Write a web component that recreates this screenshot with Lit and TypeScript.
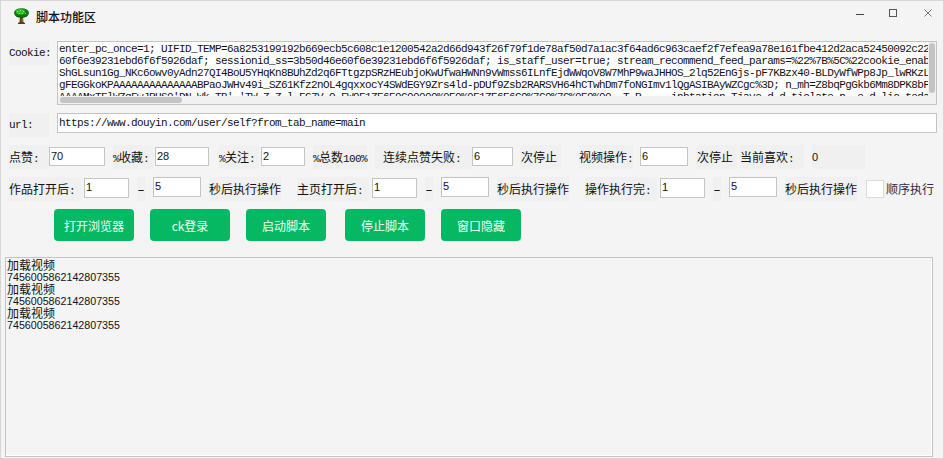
import { LitElement, html, css } from "lit";
import { customElement } from "lit/decorators.js";

const COOKIE = [
  "enter_pc_once=1; UIFID_TEMP=6a8253199192b669ecb5c608c1e1200542a2d66d943f26f79f1de78af50d7a1ac3f64ad6c963caef2f7efea9a78e161fbe412d2aca52450092c22",
  "60f6e39231ebd6f6f5926daf; sessionid_ss=3b50d46e60f6e39231ebd6f6f5926daf; is_staff_user=true; stream_recommend_feed_params=%22%7B%5C%22cookie_enab",
  "ShGLsun1Gg_NKc6owv0yAdn27QI4BoU5YHqKn8BUhZd2q6FTtgzpSRzHEubjoKwUfwaHWNn9vWmss6ILnfEjdWWqoV8W7MhP9waJHHOS_2lq52EnGjs-pF7KBzx40-BLDyWfWPp8Jp_lwRKzL",
  "gFEGGkoKPAAAAAAAAAAAAAABPaoJWHv49i_SZ61Kfz2nOL4gqxxocY4SWdEGY9Zrs4ld-pDUf9Zsb2RARSVH64hCTwhDm7foNGImv1lQgASIBAyWZCgc%3D; n_mh=Z8bqPgGkb6Mm8DPK8bFb",
  "AAAAMxTFlWZgFwJRUS0'DN_Wk_TB'_'TW_Z_Z_l_FG7V_O_FW9F1ZE6E9C00000%0E0%0F1ZE6E6C0%7C0%7C%0E0%00__T_R_____inbtation_Tjaye_d_d_tiolate_p__e_d_lio_teda_ts_e_T_I",
];

const LOG = ["加载视频", "7456005862142807355", "加载视频", "7456005862142807355", "加载视频", "7456005862142807355"];

@customElement("app-root")
export class AppRoot extends LitElement {
  static styles = css`
    :host {
      display: block;
      width: 944px;
      height: 459px;
      box-sizing: border-box;
      background: #f4f4f4;
      border: 1px solid #d6d6d6;
      overflow: hidden;
      font-family: "Noto Sans CJK SC", "Liberation Sans", sans-serif;
      color: #111;
      font-size: 12px;
    }
    .titlebar {
      display: flex;
      align-items: flex-start;
      height: 32px;
      padding-left: 13px;
    }
    .logo { width: 15px; height: 16px; margin: 7px 7px 0 0; flex: none; }
    .title { font-size: 12px; font-weight: 500; color: #111; flex: 1; line-height: 32px; }
    .ctl { width: 16px; height: 16px; margin-top: 4px; flex: none; }
    .ctl.max { margin-left: 17px; }
    .ctl.close { margin-left: 19px; margin-right: 7px; }
    .row1 {
      display: flex;
      align-items: flex-start;
      margin-top: 8px;
      padding-left: 8px;
    }
    .mono-label {
      width: 40px;
      height: 24px;
      flex: none;
      background: #f0f0f0;
      font-family: "Liberation Mono", monospace;
      font-size: 11px;
      letter-spacing: -0.6px;
      line-height: 24px;
      margin-right: 8px;
      white-space: nowrap;
    }
    .cookie {
      position: relative;
      width: 880px;
      height: 64px;
      box-sizing: border-box;
      background: #fff;
      border: 1px solid #c4c4c4;
      overflow: hidden;
    }
    .cookie-text {
      height: 54px;
      padding: 1px 0 0 1px;
      box-sizing: border-box;
      overflow: hidden;
      width: 870px;
      font-family: "Liberation Mono", monospace;
      font-size: 11px;
      letter-spacing: -0.6px;
      line-height: 12px;
      white-space: pre;
    }
    .htrack {
      position: absolute;
      left: 0;
      right: 0;
      bottom: 0;
      height: 8px;
      background: #f1f1f1;
    }
    .vtrack {
      position: absolute;
      right: 0;
      top: 0;
      bottom: 0;
      width: 8px;
      background: #f1f1f1;
    }
    .hthumb {
      position: absolute;
      left: 2px;
      bottom: 1px;
      width: 122px;
      height: 6px;
      border-radius: 3px;
      background: #c4c4c4;
    }
    .vthumb {
      position: absolute;
      right: 1px;
      top: 1px;
      width: 6px;
      height: 50px;
      border-radius: 3px;
      background: #c4c4c4;
    }
    .row2 {
      display: flex;
      align-items: flex-start;
      margin-top: 8px;
      padding-left: 8px;
    }
    .url {
      width: 880px;
      height: 20px;
      box-sizing: border-box;
      background: #fff;
      border: 1px solid #c4c4c4;
      padding-left: 1px;
      font-family: "Liberation Mono", monospace;
      font-size: 11px;
      letter-spacing: -0.6px;
      line-height: 19px;
      white-space: pre;
    }
    .row {
      display: flex;
      align-items: flex-start;
      padding-left: 8px;
      height: 24px;
      margin-top: 8px;
    }
    .lb {
      height: 24px;
      line-height: 24px;
      background: #f0f0f0;
      white-space: nowrap;
      font-size: 12px;
      color: #111;
      flex: none;
      box-sizing: border-box;
    }
    .a {
      font-family: "Liberation Mono", monospace;
      font-size: 11px;
      letter-spacing: -0.6px;
    }
    .lb.num { font-family: "Liberation Sans", sans-serif; font-size: 11px; }
    .dash { font-weight: 500; text-align: center; }
    .in {
      box-sizing: border-box;
      background: #fff;
      border: 1px solid #c4c4c4;
      padding-left: 1px;
      font-family: "Liberation Sans", sans-serif;
      font-size: 11px;
      line-height: 17px;
      flex: none;
    }
    .check {
      box-sizing: border-box;
      width: 18px;
      height: 18px;
      margin-top: 3px;
      background: #fff;
      border: 1px solid #dcdcdc;
      flex: none;
    }
    .chk-label { font-size: 12px; line-height: 24px; color: #2e2a4a; white-space: nowrap; margin-left: 2px; }
    .buttons {
      display: flex;
      gap: 16px;
      margin-top: 8px;
      padding-left: 53px;
    }
    .btn {
      width: 80px;
      height: 32px;
      border-radius: 4px;
      background: #07b863;
      color: #effff7;
      display: flex;
      align-items: center;
      justify-content: center;
      font-size: 12px;
    }
    .btn.gap { margin-left: 3px; }
    .log {
      box-sizing: border-box;
      width: 928px;
      height: 200px;
      margin: 16px 0 0 4px;
      background: #f4f4f4;
      border: 1px solid #c4c4c4;
      box-shadow: inset -1px -1px 0 #fff;
      padding: 1px 0 0 1px;
      font-size: 12px;
      line-height: 12px;
    }
    .log div { height: 12px; white-space: nowrap; color: #111; }
    .log .n { font-family: "Liberation Sans", sans-serif; font-size: 10.7px; }
  `;

  /** Latin runs sit in a narrow face so they keep the half-width advance of the original UI font. */
  private txt(text: string) {
    return text.split(/([\x20-\x7e]+)/).map((p, i) => (i % 2 ? html`<span class="a">${p}</span>` : p));
  }

  private lb(text: string, width: number, mr = 0, pad = 0) {
    return html`<span class="lb" style="width:${width}px;margin-right:${mr}px;padding-left:${pad}px">${this.txt(text)}</span>`;
  }

  private dash() {
    return html`<span class="lb dash" style="width:8px;margin-right:8px">–</span>`;
  }

  private inp(text: string, width: number, mr = 0, top = 2, h = 19) {
    return html`<span class="in" style="width:${width}px;height:${h}px;margin-right:${mr}px;margin-top:${top}px">${text}</span>`;
  }

  render() {
    return html`
      <div class="titlebar">
        <svg class="logo" viewBox="0 0 15 16">
          <path d="M6 8h3l.4 6 1.6 1v1H4v-1l1.6-1z" fill="#5e3a12" />
          <path d="M7.5 9h1l.3 5h-1z" fill="#a8763a" />
          <ellipse cx="7.5" cy="5" rx="7.5" ry="4.8" fill="#0b7a10" />
          <ellipse cx="6.5" cy="3.8" rx="4.6" ry="2.8" fill="#2fbf2a" />
          <path d="M3 3h1v1H3zM6 2h1v1H6zM9 3h1v1H9zM5 5h1v1H5zM8 5h1v1H8zM11 5h1v1h-1z" fill="#9cf05a" />
          <path d="M1 7c3 2.6 9.500 2.600 13 0-1 3-11.500 3.600-13 0z" fill="#05500a" />
        </svg>
        <span class="title">脚本功能区</span>
        <svg class="ctl" viewBox="0 0 16 16"><path d="M4 9.500h8" stroke="#444" /></svg>
        <svg class="ctl max" viewBox="0 0 16 16"><rect x="4.500" y="4.500" width="7" height="7" fill="none" stroke="#555" /></svg>
        <svg class="ctl close" viewBox="0 0 16 16"><path d="M4.500 4.500l7 7M11.500 4.500l-7 7" stroke="#777" /></svg>
      </div>
      <div class="row1">
        <span class="mono-label">Cookie:</span>
        <div class="cookie">
          <div class="cookie-text">${COOKIE.join("\n")}</div>
          <div class="htrack"></div>
          <div class="vtrack"></div>
          <div class="hthumb"></div>
          <div class="vthumb"></div>
        </div>
      </div>
      <div class="row2">
        <span class="mono-label">url:</span>
        <div class="url">https://www.douyin.com/user/self?from_tab_name=main</div>
      </div>
      <div class="row">
        ${this.lb("点赞:", 40)}${this.inp("70", 56, 8)}
        ${this.lb("%收藏:", 40, 2)}${this.inp("28", 54, 10)}
        ${this.lb("%关注:", 40, 2)}${this.inp("2", 44, 8)}
        ${this.lb("%总数100%", 54, 8)}
        ${this.lb("连续点赞失败:", 97, 0, 8)}${this.inp("6", 41, 8)}
        ${this.lb("次停止", 40, 18)}
        ${this.lb("视频操作:", 54, 7)}${this.inp("6", 48, 9)}
        ${this.lb("次停止", 40, 3)}
        ${this.lb("当前喜欢:", 64, 8)}
        <span class="lb num" style="width:53px">0</span>
      </div>
      <div class="row">
        ${this.lb("作品打开后:", 72, 3)}${this.inp("1", 45, 8, 1, 20)}
        ${this.dash()}${this.inp("5", 48, 8, 0, 20)}
        ${this.lb("秒后执行操作", 72, 16)}
        ${this.lb("主页打开后:", 72, 3)}${this.inp("1", 45, 8, 1, 20)}
        ${this.dash()}${this.inp("5", 48, 8, 0, 20)}
        ${this.lb("秒后执行操作", 72, 16)}
        ${this.lb("操作执行完:", 72, 3)}${this.inp("1", 45, 8, 1, 20)}
        ${this.dash()}${this.inp("5", 48, 8, 0, 20)}
        ${this.lb("秒后执行操作", 72, 9)}
        <span class="check"></span>
        <span class="chk-label">顺序执行</span>
      </div>
      <div class="buttons">
        <div class="btn">打开浏览器</div>
        <div class="btn">ck登录</div>
        <div class="btn">启动脚本</div>
        <div class="btn gap">停止脚本</div>
        <div class="btn">窗口隐藏</div>
      </div>
      <div class="log">
        ${LOG.map((l, i) => html`<div class=${i % 2 ? "n" : ""}>${l}</div>`)}
      </div>
    `;
  }
}
